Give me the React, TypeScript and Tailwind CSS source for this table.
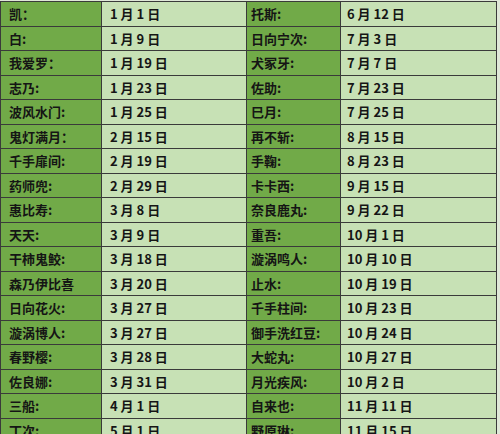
import React from 'react';

const rows: [string, string, string, string][] = [
  ['凯：', '1 月 1 日', '托斯:', '6 月 12 日'],
  ['白:', '1 月 9 日', '日向宁次:', '7 月 3 日'],
  ['我爱罗：', '1 月 19 日', '犬冢牙:', '7 月 7 日'],
  ['志乃:', '1 月 23 日', '佐助:', '7 月 23 日'],
  ['波风水门:', '1 月 25 日', '巳月:', '7 月 25 日'],
  ['鬼灯满月：', '2 月 15 日', '再不斩:', '8 月 15 日'],
  ['千手扉间:', '2 月 19 日', '手鞠:', '8 月 23 日'],
  ['药师兜:', '2 月 29 日', '卡卡西:', '9 月 15 日'],
  ['惠比寿:', '3 月 8 日', '奈良鹿丸:', '9 月 22 日'],
  ['天天:', '3 月 9 日', '重吾:', '10 月 1 日'],
  ['干柿鬼鲛:', '3 月 18 日', '漩涡鸣人:', '10 月 10 日'],
  ['森乃伊比喜', '3 月 20 日', '止水:', '10 月 19 日'],
  ['日向花火:', '3 月 27 日', '千手柱间:', '10 月 23 日'],
  ['漩涡博人:', '3 月 27 日', '御手洗红豆:', '10 月 24 日'],
  ['春野樱:', '3 月 28 日', '大蛇丸:', '10 月 27 日'],
  ['佐良娜:', '3 月 31 日', '月光疾风:', '10 月 2 日'],
  ['三船:', '4 月 1 日', '自来也:', '11 月 11 日'],
  ['丁次:', '5 月 1 日', '野原琳:', '11 月 15 日'],
];

export default function App() {
  return (
    <div className="w-[500px] h-[434px] overflow-hidden bg-[#dfe8d8] pt-px font-['Noto_Sans_CJK_SC',sans-serif] font-bold text-[13px] text-[#151515]">
      <div className="w-[497px] border-t border-l border-[#3a3a3a]">
        {rows.map((r, i) => (
          <div key={i} className="flex h-[24.5px] border-b border-[#3a3a3a]">
            <div className="w-[101px] bg-[#71aa48] border-r border-[#3a3a3a] pl-2 flex items-center">{r[0]}</div>
            <div className="w-[145px] bg-[#c7e1b5] border-r border-[#3a3a3a] pl-2 flex items-center">{r[1]}</div>
            <div className="w-[94px] bg-[#71aa48] border-r border-[#3a3a3a] pl-1 flex items-center">{r[2]}</div>
            <div className="w-[156px] bg-[#c7e1b5] border-r border-[#3a3a3a] pl-1.5 flex items-center">{r[3]}</div>
          </div>
        ))}
      </div>
    </div>
  );
}
